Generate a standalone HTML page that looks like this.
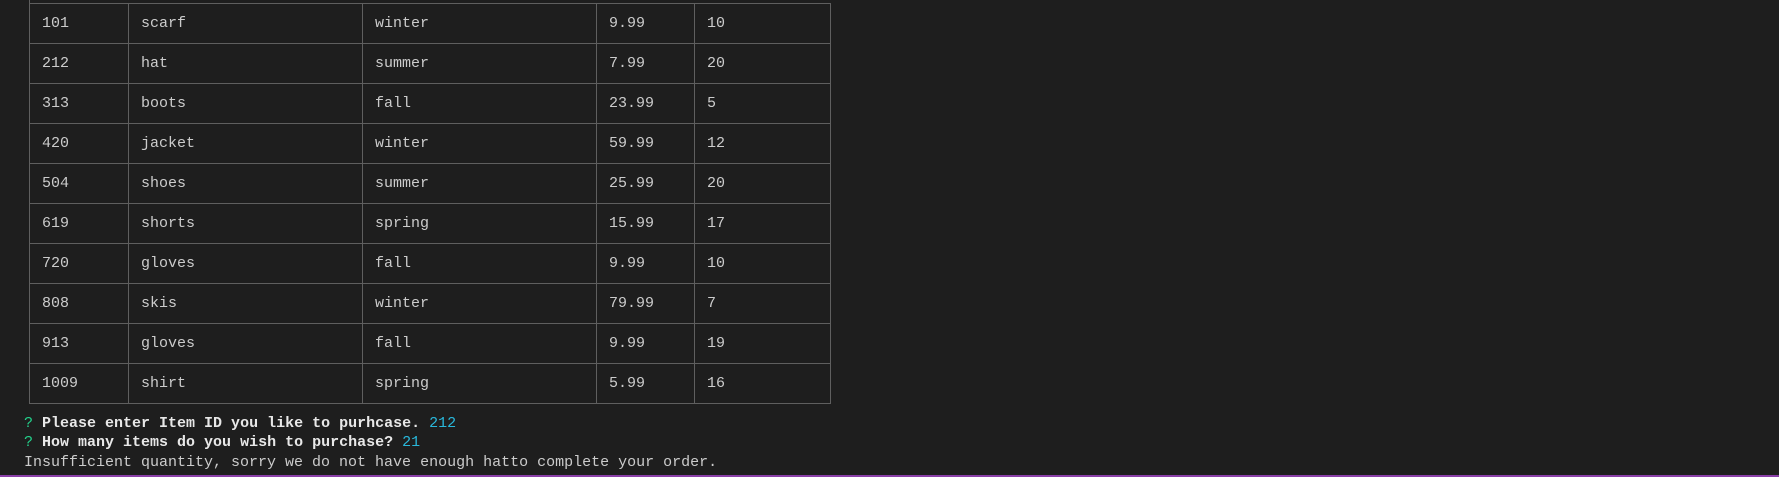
<!DOCTYPE html>
<html><head><style>
html,body{margin:0;padding:0;background:#1e1e1e;width:1779px;height:477px;overflow:hidden;position:relative}
body{font-family:"Liberation Mono",monospace;font-size:15px;color:#cccccc}
table{position:absolute;left:29px;top:3px;border-collapse:collapse}
td{border:1px solid #5f5f5f;height:40px;padding:0 0 0 12px;box-sizing:border-box;vertical-align:middle}
.l{position:absolute;left:24px;white-space:pre;line-height:18px}
.q{color:#23d18b}.b{font-weight:bold;color:#e8e8e8}.c{color:#29b8db}
.p{position:absolute;left:0;right:0;bottom:0;height:2px;background:#8a3fa8}
</style></head><body>
<div style="position:absolute;left:29px;top:0;width:801px;height:3px;border-left:1px solid #5f5f5f;box-sizing:border-box"></div>
<table>
<colgroup><col style="width:99px"><col style="width:234px"><col style="width:234px"><col style="width:98px"><col style="width:136px"></colgroup>
<tr><td>101</td><td>scarf</td><td>winter</td><td>9.99</td><td>10</td></tr>
<tr><td>212</td><td>hat</td><td>summer</td><td>7.99</td><td>20</td></tr>
<tr><td>313</td><td>boots</td><td>fall</td><td>23.99</td><td>5</td></tr>
<tr><td>420</td><td>jacket</td><td>winter</td><td>59.99</td><td>12</td></tr>
<tr><td>504</td><td>shoes</td><td>summer</td><td>25.99</td><td>20</td></tr>
<tr><td>619</td><td>shorts</td><td>spring</td><td>15.99</td><td>17</td></tr>
<tr><td>720</td><td>gloves</td><td>fall</td><td>9.99</td><td>10</td></tr>
<tr><td>808</td><td>skis</td><td>winter</td><td>79.99</td><td>7</td></tr>
<tr><td>913</td><td>gloves</td><td>fall</td><td>9.99</td><td>19</td></tr>
<tr><td>1009</td><td>shirt</td><td>spring</td><td>5.99</td><td>16</td></tr>
</table>
<div class="l" style="top:415px"><span class="q">?</span> <span class="b">Please enter Item ID you like to purhcase.</span> <span class="c">212</span></div>
<div class="l" style="top:434px"><span class="q">?</span> <span class="b">How many items do you wish to purchase?</span> <span class="c">21</span></div>
<div class="l" style="top:454px">Insufficient quantity, sorry we do not have enough hatto complete your order.</div>
<div class="p"></div>
</body></html>
